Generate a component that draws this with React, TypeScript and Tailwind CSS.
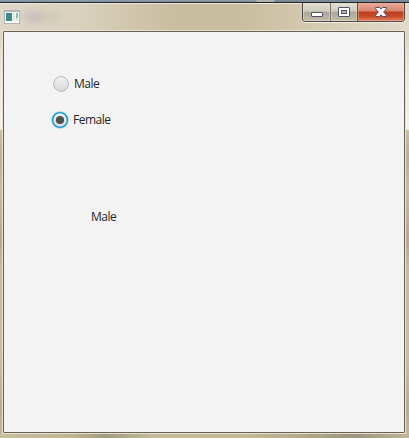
import React from 'react';

const labelFont = "font-['Open_Sans','Noto_Sans',sans-serif] text-[12px] leading-4 tracking-[-0.5px] text-[#262626]";

function AppIcon() {
  return (
    <svg width="16" height="14" viewBox="0 0 16 14" shapeRendering="crispEdges">
      <defs>
        <linearGradient id="screen" x1="0" y1="0" x2="1" y2="1">
          <stop offset="0" stopColor="#3f7fa5" />
          <stop offset="1" stopColor="#379a65" />
        </linearGradient>
      </defs>
      <rect x="0" y="0" width="16" height="14" fill="#b0b6b8" />
      <rect x="1" y="2" width="14" height="11" fill="#f7f8f7" />
      <rect x="2" y="3" width="6" height="8" fill="url(#screen)" />
      <rect x="9" y="3" width="2" height="8" fill="#e3e4e4" />
      <rect x="12" y="3" width="2" height="5" fill="#7fc3b2" />
      <rect x="12" y="8" width="2" height="3" fill="#e3e4e4" />
    </svg>
  );
}

function CaptionButtons() {
  return (
    <div className="flex h-[19px] w-[103px] overflow-hidden rounded-b-[4px] border border-t-0 border-[#4e4a46] shadow-[0_1px_0_#f1ecdf]">
      <button aria-label="Minimize" className="flex w-[28px] items-center justify-center border-r border-[#77736a] bg-[linear-gradient(#e3dfd5_0%,#cfcabc_46%,#aaa597_50%,#c3bdaa_100%)] shadow-[inset_0_0_0_1px_#e5e1d488]">
        <svg width="12" height="5" viewBox="0 0 12 5" className="mt-[4px]">
          <rect x=".5" y=".5" width="11" height="4" rx=".5" fill="#fff" stroke="#525467" />
        </svg>
      </button>
      <button aria-label="Maximize" className="flex w-[27px] items-center justify-center border-r border-[#6a4842] bg-[linear-gradient(#e3dfd5_0%,#cfcabc_46%,#aaa597_50%,#c3bdaa_100%)] shadow-[inset_0_0_0_1px_#e5e1d488]">
        <svg width="12" height="10" viewBox="0 0 12 10">
          <rect x=".5" y=".5" width="11" height="9" rx=".5" fill="#fff" stroke="#525467" />
          <rect x="3.5" y="3.5" width="5" height="3" fill="#bfbaad" stroke="#525467" />
        </svg>
      </button>
      <button aria-label="Close" className="flex flex-1 items-center justify-center bg-[linear-gradient(#e6aa98_0%,#d98770_44%,#bd3c20_50%,#c94b28_75%,#e18461_100%)] shadow-[inset_0_0_0_1px_#f0b49d88]">
        <svg width="12" height="10" viewBox="0 0 12 10">
          <path d="M.7.5H4.3L6 2.2 7.7.5h3.6v1.4L8.6 5l2.7 3.1v1.4H7.7L6 7.8 4.3 9.5H.7V8.1L3.4 5 .7 1.9z" fill="#fff" stroke="#52505f" strokeWidth="1" />
        </svg>
      </button>
    </div>
  );
}

function Radio({ selected = false }: { selected?: boolean }) {
  return (
    <svg width="18" height="18" viewBox="0 0 18 18" className="shrink-0">
      <defs>
        <linearGradient id="radioFace" x1="0" y1="0" x2="0" y2="1">
          <stop offset="0" stopColor="#f2f2f2" />
          <stop offset="1" stopColor="#d9d9d9" />
        </linearGradient>
      </defs>
      {selected && <circle cx="9" cy="9" r="8.3" fill="none" stroke="#b8e3f1" strokeWidth="1.4" />}
      <circle cx="9" cy="9" r="7.4" fill="url(#radioFace)" stroke={selected ? '#089bca' : '#b8b8b8'} strokeWidth={selected ? 1.4 : 1} />
      {selected && <circle cx="9" cy="9" r="4.1" fill="#505050" />}
    </svg>
  );
}

export default function App() {
  return (
    <div className="flex h-[438px] w-[409px] flex-col overflow-hidden bg-[#c9bea0]">
      <div className="h-[2px] shrink-0 bg-[linear-gradient(90deg,#8495a5_0_256px,#b1b0ad_257px_274px,#788895_275px)]" />
      <div className="h-px shrink-0 bg-[#222323]" />
      <div className="flex flex-1 flex-col bg-[linear-gradient(#e3dccb_0px,#ddd5c2_28px,#eee9de_70px,#f5f2e9_126px,#c8bd9e_128px,#bbb092_155px,#c9be9f_185px,#b9a792_238px,#c8bd9c_265px,#c9be9e_360px,#b8ae92_405px,#c3b898_435px)]">
        <header className="flex h-[27px] shrink-0 items-start justify-between border-t border-[#f0ecdf] bg-[linear-gradient(90deg,#ded7c8_0%,#d9d1bd_20%,#cabea0_42%,#cabea0_60%,#d5cbb2_78%,#e1dac9_100%)] pl-1 pr-1">
          <div className="mt-[6px] flex items-center">
            <AppIcon />
            <span className="ml-1 h-2 w-5 bg-[#aa9bb2] opacity-50 blur-[4px]" />
            <span className="h-2 w-4 bg-[#b5bea6] opacity-50 blur-[4px]" />
          </div>
          <div className="-mt-px"><CaptionButtons /></div>
        </header>
        <main className="ml-[2px] mr-[3px] h-[404px] border border-[#e8e1d0]">
          <div className="flex h-full flex-col items-start rounded-[1px] border border-[#666256] bg-[#f3f3f3] pl-[47px] pt-[43px]">
            <label className="flex h-[18px] items-center gap-[4px] pl-[1px]">
              <Radio />
              <span className={labelFont}>Male</span>
            </label>
            <label className="mt-[18px] flex h-[18px] items-center gap-[4px]">
              <Radio selected />
              <span className={labelFont}>Female</span>
            </label>
            <span className={`${labelFont} ml-[40px] mt-[80px]`}>Male</span>
          </div>
        </main>
        <footer className="flex-1 bg-[linear-gradient(90deg,#c8bf9f_0%,#bfb492_18%,#a49a80_26%,#c6bc9b_38%,#c5b995_60%,#b5aa8b_73%,#9d947e_87%,#bfb59a_100%)]" />
      </div>
    </div>
  );
}
